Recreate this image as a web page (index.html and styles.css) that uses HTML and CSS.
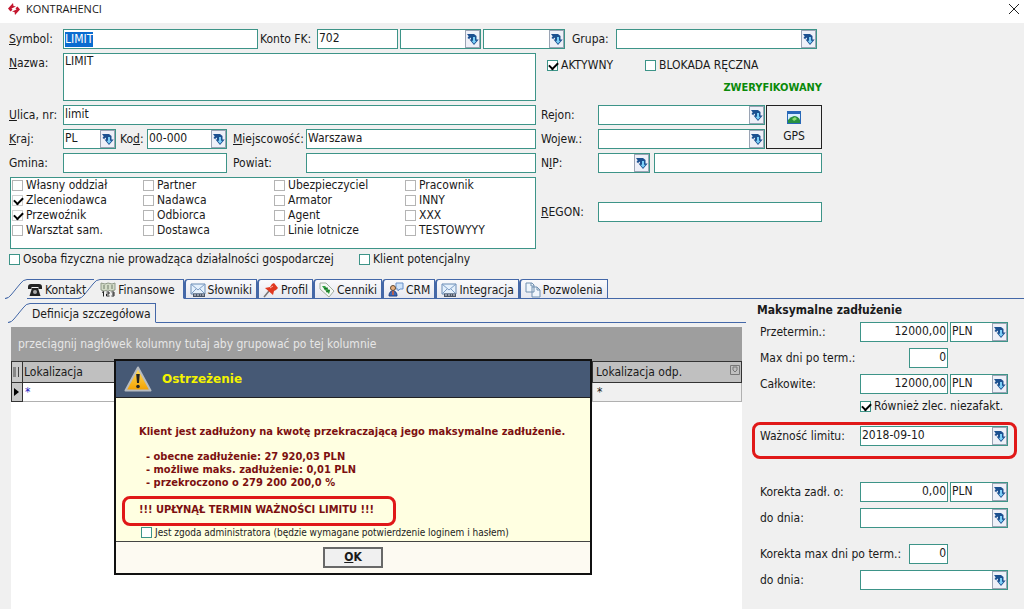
FILE: index.html
```html
<!DOCTYPE html>
<html lang="pl">
<head>
<meta charset="utf-8">
<title>KONTRAHENCI</title>
<link rel="stylesheet" href="styles.css">
</head>
<body>
<svg class="sprite" aria-hidden="true">
  <symbol id="i-drop" viewBox="0 0 13 16">
    <path d="M1 3h7l2.500 2v3.500h2.200l-4.700 5.500-4.500-5.500h1.500v-2l-2 1.500-1.500-1 1.200-1.800z" fill="#1c5090"/>
    <path d="M7 6h2v3.800h1.500l-2.500 2.900-2.400-2.900h1.400z" fill="#7cd0f8"/>
  </symbol>
  <symbol id="i-slant" viewBox="0 0 22 20">
    <path class="slant-fill" d="M0 20Q4 19 6 16L15 5Q18 .5 22 .5V20z"/>
    <path class="slant-line" d="M0 19.500Q4 19 6 16L15 5Q18 .5 22 .5" fill="none" stroke="#4468a8"/>
  </symbol>
  <symbol id="i-mail" viewBox="0 0 16 16">
    <path d="M1 2h14v10H1z" fill="#e4f0fc" stroke="#6a8cb4"/><path d="M1 2l7 6 7-6M1 12l5-5M15 12l-5-5" fill="none" stroke="#7d9cc4"/>
    <path d="M3 11.500h12v3.500H3z" fill="#4a5666"/><path d="M4 13h2M7 13h2M10 13h1M12 13h2" stroke="#dde"/>
  </symbol>
</svg>

<header class="titlebar">
  <svg class="logo" viewBox="0 0 14 14"><path d="M6 1L1 6.500 3.500 9.500 5.500 7.800 4.500 6.500 9 4.500 6.500 4zM8 13L13 7.500 10.500 4.500 8.500 6.200 9.500 7.500 5 9.500 7.500 10z" fill="#c4172f"/></svg>
  <h1>KONTRAHENCI</h1>
  <button class="close" aria-label="Zamknij"><svg viewBox="0 0 12 12"><path d="M1 1l10 10M11 1L1 11" stroke="#222" fill="none"/></svg></button>
</header>

<form class="form">
  <div class="account">
    <label for="symbol"><u>S</u>ymbol:</label>
    <div class="field symbol"><mark>LIMIT</mark><input id="symbol" type="text"></div>
    <label for="fk">Konto FK:</label>
    <input id="fk" class="field" value="702">
    <span class="combo"><select aria-label="Konto FK 2"><option></option></select><svg><use href="#i-drop"/></svg></span>
    <span class="combo"><select aria-label="Konto FK 3"><option></option></select><svg><use href="#i-drop"/></svg></span>
    <label class="in-lg" for="grupa">Grupa:</label>
    <span class="combo"><select id="grupa"><option></option></select><svg><use href="#i-drop"/></svg></span>
  </div>

  <div class="columns">
    <div class="left">
      <div class="wide tall"><label for="nazwa"><u>N</u>azwa:</label><textarea id="nazwa" class="field">LIMIT</textarea></div>
      <div class="wide"><label for="ulica"><u>U</u>lica, nr:</label><input id="ulica" class="field" value="limit"></div>
      <div class="address">
        <label for="kraj"><u>K</u>raj:</label>
        <span class="combo"><select id="kraj"><option>PL</option></select><svg><use href="#i-drop"/></svg></span>
        <label class="in-sm" for="kod">Ko<u>d</u>:</label>
        <span class="combo"><select id="kod"><option>00-000</option></select><svg><use href="#i-drop"/></svg></span>
        <label class="in-md" for="miasto"><u>M</u>iejscowość:</label>
        <input id="miasto" class="field" value="Warszawa">
        <label for="gmina">Gmina:</label>
        <input id="gmina" class="field span3">
        <label class="in-md" for="powiat">Powiat:</label>
        <input id="powiat" class="field">
      </div>
      <div class="roles">
        <label><input type="checkbox">Własny oddział</label><label><input type="checkbox">Partner</label><label><input type="checkbox">Ubezpieczyciel</label><label><input type="checkbox">Pracownik</label>
        <label><input type="checkbox" checked>Zleceniodawca</label><label><input type="checkbox">Nadawca</label><label><input type="checkbox">Armator</label><label><input type="checkbox">INNY</label>
        <label><input type="checkbox" checked>Przewoźnik</label><label><input type="checkbox">Odbiorca</label><label><input type="checkbox">Agent</label><label><input type="checkbox">XXX</label>
        <label><input type="checkbox">Warsztat sam.</label><label><input type="checkbox">Dostawca</label><label><input type="checkbox">Linie lotnicze</label><label><input type="checkbox">TESTOWYYY</label>
      </div>
    </div>

    <div class="right">
      <div class="flags">
        <label><input type="checkbox" checked>AKTYWNY</label>
        <label><input type="checkbox">BLOKADA RĘCZNA</label>
      </div>
      <p class="status">ZWERYFIKOWANY</p>
      <div class="region">
        <label for="rejon">Rejon:</label>
        <span class="combo"><select id="rejon"><option></option></select><svg><use href="#i-drop"/></svg></span>
        <button type="button" class="gps">
          <svg viewBox="0 0 14 14"><path d="M0 0h14v13H0z" fill="#2868b8"/><path d="M1 3h12v9H1z" fill="#d8f0ff"/><path d="M1 12V9q2-3 6-4 4 0 6 4v3z" fill="#289040"/><path d="M5 8l3-2 2 2-3 2z" fill="#8ce070"/></svg>
          GPS
        </button>
        <label for="wojew">Wojew.:</label>
        <span class="combo"><select id="wojew"><option></option></select><svg><use href="#i-drop"/></svg></span>
      </div>
      <div class="nip">
        <label for="nip">N<u>I</u>P:</label>
        <span class="combo"><select aria-label="Kraj NIP"><option></option></select><svg><use href="#i-drop"/></svg></span>
        <input id="nip" class="field">
      </div>
      <div class="regon">
        <label for="regon"><u>R</u>EGON:</label>
        <input id="regon" class="field">
      </div>
    </div>
  </div>

  <div class="extras">
    <label><input type="checkbox">Osoba fizyczna nie prowadząca działalności gospodarczej</label>
    <label><input type="checkbox">Klient potencjalny</label>
  </div>
</form>

<nav class="tabs" role="tablist">
  <button class="tab slanted" role="tab"><svg class="slant"><use href="#i-slant"/></svg><span><svg class="ico" viewBox="0 0 16 16"><path d="M1 5Q1 2 4 2h8q3 0 3 3v2h-3.500V5h-7v2H1zM5 6h6l2.500 8h-11z" fill="#222"/><circle cx="8" cy="10" r="2" fill="#aaa"/></svg>Kontakt</span></button>
  <button class="tab slanted active" role="tab" aria-selected="true"><svg class="slant"><use href="#i-slant"/></svg><span><svg class="ico" viewBox="0 0 16 16"><path d="M1 1l4 1 3-1 4 1 3-1v7l-4 1-3-1-4 1-3-1z" fill="#d4dcc8" stroke="#909a88"/><path d="M4 3v4M8 3v4M12 3v4" stroke="#6e7a68"/><path d="M2 10.500l1.500-1v5M6.500 10h2.500v2h-2.500v2h3M11.500 10h2.500v4h-2.500M12 12h2" fill="none" stroke="#222"/></svg>Finansowe</span></button>
  <button class="tab" role="tab"><span><svg class="ico"><use href="#i-mail"/></svg>Słowniki</span></button>
  <button class="tab" role="tab"><span><svg class="ico" viewBox="0 0 16 16"><path d="M1 15l5-6" stroke="#777" stroke-width="1.500"/><path d="M2 6l5-1 2-3 2-1 4 5-2 2-2 1-1 4z" fill="#e03820"/><path d="M7 6l3-2" stroke="#ffb0a0"/></svg>Profil</span></button>
  <button class="tab" role="tab"><span><svg class="ico" viewBox="0 0 16 16"><path d="M1 1h6l8 8-5 6-9-8z" fill="#f4f8f4" stroke="#a0aca0"/><path d="M3 4l3 0 5 5-1 3-4-4z" fill="#30a040"/><path d="M5 7l4-1M7 10l4-2" stroke="#186828"/></svg>Cenniki</span></button>
  <button class="tab" role="tab"><span><svg class="ico" viewBox="0 0 16 16"><path d="M8 1h7v6h-3l-2 2V7H8z" fill="#d0e4fa" stroke="#6890c8"/><circle cx="5" cy="6" r="2.500" fill="#e8b080" stroke="#604830"/><path d="M1 14q0-5 4-5t4 5z" fill="#3868b8" stroke="#204080"/><path d="M5 9v4" stroke="#e06030" stroke-width="1.500"/></svg>CRM</span></button>
  <button class="tab" role="tab"><span><svg class="ico"><use href="#i-mail"/></svg>Integracja</span></button>
  <button class="tab" role="tab"><span><svg class="ico" viewBox="0 0 16 16"><path d="M1 1h6l2 2v7H1zM7 5h5l3 3v7H7z" fill="#f0f6fc" stroke="#7090b0"/><path d="M12 5v3h3M6 1v3h3" fill="none" stroke="#7090b0"/></svg>Pozwolenia</span></button>
</nav>

<main class="main">
  <section class="detail">
    <div class="tabs sub" role="tablist">
      <button class="tab slanted active" role="tab" aria-selected="true"><svg class="slant"><use href="#i-slant"/></svg><span>Definicja szczegółowa</span></button>
    </div>
    <div class="grid">
      <p class="groupbar">przeciągnij nagłówek kolumny tutaj aby grupować po tej kolumnie</p>
      <table>
        <thead><tr>
          <th class="mark"><svg viewBox="0 0 8 12"><path d="M1 2h3M1 4h3M1 6h3M1 8h3M1 10h3M6.500 1v10" stroke="#444" fill="none"/></svg></th>
          <th>Lokalizacja</th>
          <th class="reply"><span>Lokalizacja odp.<svg viewBox="0 0 10 10"><path d="M.5.5h9v9h-9zM3 2h4v3L5 7 3 5z" fill="none" stroke="#777"/></svg></span></th>
        </tr></thead>
        <tbody><tr>
          <td class="mark"><svg viewBox="0 0 8 12"><path d="M2 2l5 4-5 4z" fill="#000"/></svg></td>
          <td class="new">*</td>
          <td class="reply">*</td>
        </tr></tbody>
      </table>

      <div class="dialog" role="dialog" aria-labelledby="dlg-title">
        <header>
          <svg viewBox="0 0 28 26"><defs><linearGradient id="warn" x2="0" y2="1"><stop offset="0" stop-color="#ffe060"/><stop offset="1" stop-color="#f4a000"/></linearGradient></defs><path d="M14 1.500L26.500 24.500h-25z" fill="url(#warn)" stroke="#b8bcc0" stroke-width="2" stroke-linejoin="round"/><path d="M12.200 8h3.600l-.8 9h-2z" fill="#222"/><circle cx="14" cy="20.500" r="1.800" fill="#222"/></svg>
          <h2 id="dlg-title">Ostrzeżenie</h2>
        </header>
        <div class="message">
          <p>Klient jest zadłużony na kwotę przekraczającą jego maksymalne zadłużenie.</p>
          <ul>
            <li>- obecne zadłużenie: 27 920,03 PLN</li>
            <li>- możliwe maks. zadłużenie: 0,01 PLN</li>
            <li>- przekroczono o 279 200 200,0 %</li>
          </ul>
          <p class="callout">!!! UPŁYNĄŁ TERMIN WAŻNOŚCI LIMITU !!!</p>
          <label><input type="checkbox">Jest zgoda administratora (będzie wymagane potwierdzenie loginem i hasłem)</label>
        </div>
        <footer><button type="button"><u>O</u>K</button></footer>
      </div>
    </div>
  </section>

  <aside class="limits">
    <h2>Maksymalne zadłużenie</h2>
    <div class="limit"><label for="prz">Przetermin.:</label><input id="prz" class="field num" value="12000,00"><span class="combo"><select aria-label="Waluta"><option>PLN</option></select><svg><use href="#i-drop"/></svg></span></div>
    <div class="limit"><label for="dni">Max dni po term.:</label><input id="dni" class="field num days" value="0"></div>
    <div class="limit"><label for="cal">Całkowite:</label><input id="cal" class="field num" value="12000,00"><span class="combo"><select aria-label="Waluta"><option>PLN</option></select><svg><use href="#i-drop"/></svg></span></div>
    <label class="also"><input type="checkbox" checked>Również zlec. niezafakt.</label>
    <div class="callout"><div class="limit"><label for="waz">Ważność limitu:</label><span class="combo date"><select id="waz"><option>2018-09-10</option></select><svg><use href="#i-drop"/></svg></span></div></div>
    <div class="limit"><label for="kor">Korekta zadł. o:</label><input id="kor" class="field num" value="0,00"><span class="combo"><select aria-label="Waluta"><option>PLN</option></select><svg><use href="#i-drop"/></svg></span></div>
    <div class="limit"><label for="do1">do dnia:</label><span class="combo date"><select id="do1"><option></option></select><svg><use href="#i-drop"/></svg></span></div>
    <div class="limit spaced"><label for="kdni">Korekta max dni po term.:</label><input id="kdni" class="field num days" value="0"></div>
    <div class="limit"><label for="do2">do dnia:</label><span class="combo date"><select id="do2"><option></option></select><svg><use href="#i-drop"/></svg></span></div>
  </aside>
</main>
</body>
</html>
```
FILE: styles.css
```css
:root {
  --edge: #3d9488;
  --tab: #4468a8;
  --face: #f0f0f0;
  --ui: "DejaVu Sans Condensed", "DejaVu Sans", sans-serif;
}
* { box-sizing: border-box; margin: 0; }
body {
  min-height: 100vh;
  display: flex;
  flex-direction: column;
  background: var(--face);
  color: #1a1a1a;
  font: 12px/15px var(--ui);
}
input, select, textarea, button { font: inherit; color: inherit; }
.sprite { display: none; }
label { white-space: nowrap; }

.titlebar {
  display: flex;
  align-items: center;
  gap: 5px;
  height: 23px;
  padding: 0 4px 6px 7px;
  background: #fff;
}
.titlebar h1 { flex: 1; font: 11px/16px "Open Sans", sans-serif; }
.logo { width: 14px; height: 14px; }
.close { width: 12px; height: 12px; padding: 0; border: 0; background: none; }
.close svg { display: block; }

.field, .combo {
  width: 100%;
  min-width: 0;
  height: 20px;
  border: 1px solid var(--edge);
  border-radius: 0;
  background: #fff;
}
.field { padding: 0 1px 2px; outline: 0; }
textarea.field { height: 48px; padding: 0 1px; resize: none; }
.combo { display: grid; grid-template: 18px / 1fr; }
.combo > * { grid-area: 1 / 1; }
.combo select {
  width: 100%;
  padding: 0 16px 2px 1px;
  border: 0;
  background: none;
  appearance: none;
  outline: 0;
}
.combo svg {
  justify-self: end;
  width: 15px;
  height: 18px;
  border: 1px solid #9aa4b4;
  background: #eef0f8;
  pointer-events: none;
}
.symbol { display: flex; align-items: center; padding: 1px; }
.symbol mark { background: #0a6cd0; color: #fff; line-height: 15px; }
.symbol input { flex: 1; min-width: 0; height: 14px; padding: 0; border: 0; outline: 0; background: none; }

input[type="checkbox"] {
  appearance: none;
  flex: none;
  width: 11px;
  height: 11px;
  border: 1px solid var(--edge);
  background: #fff;
}
input[type="checkbox"]:checked::before {
  content: "";
  display: block;
  width: 7px;
  height: 4px;
  margin: 1px;
  border: solid #000;
  border-width: 0 0 2px 2px;
  transform: rotate(-45deg);
}
label:has(input) { display: flex; align-items: center; gap: 3px; }

.account {
  display: grid;
  grid-template-columns: 52px minmax(0, 195fr) 55px minmax(0, 81fr) minmax(0, 81fr) minmax(0, 82fr) 47px minmax(0, 201fr);
  gap: 2px;
  align-items: center;
  padding: 6px 207px 4px 9px;
}
.in-sm { padding-left: 2px; }
.in-md { padding-left: 4px; }
.in-lg { padding-left: 5px; }

.columns {
  display: grid;
  grid-template-columns: minmax(0, 527fr) minmax(0, 281fr);
  gap: 5px;
  padding: 0 202px 0 9px;
}
.left { display: flex; flex-direction: column; gap: 4px; }
.wide { display: grid; grid-template-columns: 52px 1fr; gap: 2px; align-items: center; }
.tall { align-items: start; }
.tall label { padding-top: 3px; }
.address {
  display: grid;
  grid-template-columns: 52px minmax(0, 53fr) 27px minmax(0, 80fr) 75px minmax(0, 230fr);
  gap: 4px 2px;
  align-items: center;
}
.span3 { grid-column: span 3; }
.roles {
  display: grid;
  grid-template-columns: repeat(4, 1fr);
  align-content: start;
  height: 72px;
  margin-left: 1px;
  border: 1px solid var(--edge);
  background: #fff;
}
.roles label { padding-left: 1px; }
.roles input { border-color: #b4b4b4; }
.roles input:checked { border-color: #d0d0d0; }

.right { display: flex; flex-direction: column; }
.flags { display: flex; gap: 32px; height: 24px; padding-left: 6px; }
.status { color: #0a8a0a; font-size: 11px; font-weight: bold; line-height: 22px; text-align: right; }
.region {
  display: grid;
  grid-template-columns: 56px 1fr 56px;
  gap: 4px 1px;
  align-items: center;
  padding-top: 6px;
}
.gps {
  grid-area: 1 / 3 / 3 / 4;
  align-self: stretch;
  display: flex;
  flex-direction: column;
  align-items: center;
  justify-content: center;
  gap: 4px;
  padding: 0;
  border: 1px solid #222;
  background: var(--face);
}
.gps svg { width: 14px; height: 14px; }
.nip { display: grid; grid-template-columns: 56px 52px 1fr; column-gap: 1px; align-items: center; padding-top: 4px; }
.nip .field { margin-left: 3px; width: auto; }
.regon { display: grid; grid-template-columns: 56px 1fr; gap: 1px; align-items: center; padding-top: 29px; }

.extras { display: grid; grid-template-columns: 350px 1fr; height: 20px; padding-left: 9px; }

.tabs { display: flex; height: 20px; margin: 10px 0 0 5px; border-bottom: 1px solid var(--tab); }
.tab { display: flex; height: 20px; padding: 0; border: 0; background: none; white-space: nowrap; }
.tab span {
  display: flex;
  align-items: center;
  gap: 2px;
  height: 20px;
  padding: 2px 4px 0;
  border: 1px solid var(--tab);
  border-left: 2px solid var(--tab);
  border-radius: 4px 0 0 0;
  background: linear-gradient(#fafafc, #e6e8f0);
}
.tab.slanted span { padding: 2px 8px 0 0; border-width: 1px 0; border-radius: 0; background: var(--face); }
.tab.slanted.active span { border-right-width: 1px; border-bottom-color: var(--face); }
.slant { flex: none; width: 22px; height: 20px; fill: var(--face); }
.tab + .tab.slanted { margin-left: -16px; }
.ico { width: 16px; height: 16px; }

.main { flex: 1; display: flex; gap: 10px; }
.detail { flex: 1; min-width: 0; display: flex; flex-direction: column; }
.tabs.sub { margin: 4px -4px 4px 8px; }
.sub .tab.slanted span { padding: 2px 4px 0 2px; }
.grid { position: relative; flex: 1; margin-left: 11px; background: #fff; }
.groupbar { height: 34px; padding: 0 7px; background: #9e9e9e; color: #e6e6e6; line-height: 34px; }
.grid table { width: 100%; border-collapse: collapse; table-layout: fixed; }
.grid th { height: 21px; padding: 0 1px; border: 1px solid #333; background: #c0c0c0; font-weight: normal; text-align: left; }
.grid td { height: 19px; padding: 0 2px; border-bottom: 1px solid #b0b0b0; }
.grid .mark { width: 11px; padding: 0; border: 1px solid #333; background: #c8c8c8; }
.mark svg { display: block; width: 8px; height: 12px; }
.grid .reply { width: 149px; }
.grid th.reply { padding-left: 3px; }
.grid td.reply { background: var(--face); border: 1px solid #b0b0b0; padding-left: 4px; }
.reply span { display: flex; justify-content: space-between; }
.reply svg { width: 10px; height: 10px; }
.new { color: #2020c0; }

.dialog {
  position: absolute;
  top: 32px;
  left: 103px;
  width: 478px;
  border: 2px solid #111;
  background: #ffffe1;
}
.dialog header { display: flex; align-items: center; gap: 10px; height: 37px; padding-left: 8px; border-bottom: 1px solid #222; background: #465975; }
.dialog header svg { width: 28px; height: 26px; }
.dialog h2 { color: #f4f400; font: bold 12px/15px "DejaVu Sans", sans-serif; }
.message { padding: 27px 6px 2px; color: #7c1010; font-size: 11px; font-weight: bold; line-height: 13px; }
.message p, .message ul { padding-left: 17px; }
.message ul { margin: 12px 0 7px 7px; list-style: none; }
.callout { border: 3px solid #e01818; border-radius: 8px; }
.message .callout { width: 274px; padding: 4px 0 7px 14px; white-space: nowrap; }
.message label { padding: 0 0 0 19px; color: #222; font-size: 10px; font-weight: normal; }
.dialog footer { display: flex; justify-content: center; padding: 5px; border-top: 1px solid #444; background: #fdfaf2; }
.dialog footer button { width: 60px; height: 21px; padding: 0; border: 2px solid #686868; background: var(--face); font-size: 12px; font-weight: bold; line-height: 15px; }

.limits { flex: none; width: 272px; padding: 4px 7px 18px 0; }
.limits h2 { padding: 0 0 4px 5px; font-size: 12px; line-height: 15px; }
.limit { display: flex; align-items: center; gap: 2px; height: 20px; margin: 0 9px 6px 8px; }
.limit label { flex: 1; }
.limit .field { width: 88px; }
.limit .combo { width: 58px; }
.limit .combo.date { width: 148px; }
.limit .days { width: 39px; margin-right: 60px; }
.num { text-align: right; }
.also { height: 13px; margin: 0 0 9px 108px; }
.limits .callout { height: 37px; margin-bottom: 23px; padding-top: 1px; }
.callout .limit { margin: 0 6px 0 5px; }
.limit.spaced { margin-top: 16px; }
```
